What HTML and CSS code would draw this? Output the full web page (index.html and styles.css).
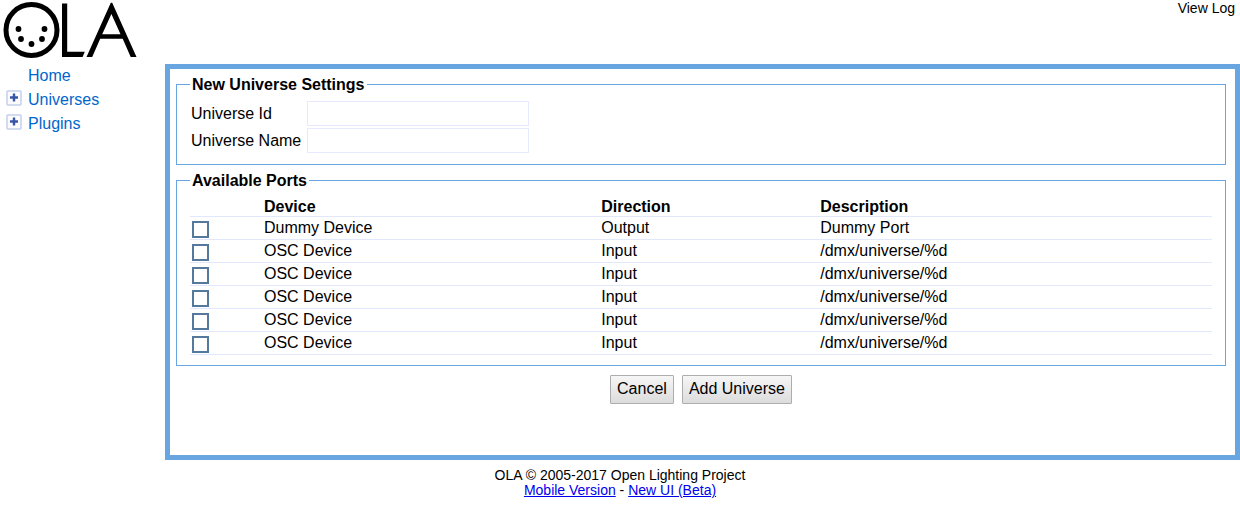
FILE: index.html
```html
<!DOCTYPE html>
<html lang="en">
<head>
<meta charset="utf-8">
<title>OLA</title>
<link rel="stylesheet" href="styles.css">
</head>
<body>
<div class="page">
  <aside class="sidebar">
    <svg class="logo" width="136" height="60" viewBox="0 0 136 60" role="img" aria-label="OLA">
      <circle cx="31.500" cy="30" r="25.500" fill="none" stroke="#000" stroke-width="5"/>
      <circle cx="18.500" cy="29" r="2.900"/><circle cx="44.500" cy="29" r="2.900"/>
      <circle cx="21" cy="39" r="2.900"/><circle cx="42" cy="39" r="2.900"/>
      <circle cx="31.500" cy="44" r="2.900"/>
      <path d="M62 3.500h5.200v48.200h17.600l-2.200 5.200H62z"/>
      <path fill-rule="evenodd" d="M110.800 2.800h1.400L136.500 57h-5.800l-8-18.200h-22.500L92.200 57h-5.700zM111.400 14l-9.200 20.200h18.300z"/>
    </svg>
    <nav class="nav">
      <div class="nav-row"><span class="toggle-space"></span><a href="#home">Home</a></div>
      <div class="nav-row"><button class="toggle" type="button" aria-label="Expand Universes"><svg width="16" height="16" viewBox="0 0 16 16"><rect x="1" y="1" width="14" height="14" rx="1" fill="#fcfcff" stroke="#c3cfea" stroke-width="1.500"/><path d="M4 7.500h8M8 3.500v8" stroke="#3855a5" stroke-width="2.400"/></svg></button><a href="#universes">Universes</a></div>
      <div class="nav-row"><button class="toggle" type="button" aria-label="Expand Plugins"><svg width="16" height="16" viewBox="0 0 16 16"><rect x="1" y="1" width="14" height="14" rx="1" fill="#fcfcff" stroke="#c3cfea" stroke-width="1.500"/><path d="M4 7.500h8M8 3.500v8" stroke="#3855a5" stroke-width="2.400"/></svg></button><a href="#plugins">Plugins</a></div>
    </nav>
  </aside>
  <div class="content">
    <header class="top"><a class="log" href="#log">View Log</a></header>
    <main class="frame">
      <form>
        <fieldset class="settings">
          <legend>New Universe Settings</legend>
          <div class="fields">
            <label for="uid">Universe Id</label><input id="uid" type="text">
            <label for="uname">Universe Name</label><input id="uname" type="text">
          </div>
        </fieldset>
        <fieldset class="ports">
          <legend>Available Ports</legend>
          <table>
            <colgroup><col class="c-check"><col class="c-device"><col class="c-direction"><col></colgroup>
            <thead><tr><th></th><th>Device</th><th>Direction</th><th>Description</th></tr></thead>
            <tbody>
              <tr><td><input type="checkbox" aria-label="Dummy Device"></td><td>Dummy Device</td><td>Output</td><td>Dummy Port</td></tr>
              <tr><td><input type="checkbox" aria-label="OSC Device 1"></td><td>OSC Device</td><td>Input</td><td>/dmx/universe/%d</td></tr>
              <tr><td><input type="checkbox" aria-label="OSC Device 2"></td><td>OSC Device</td><td>Input</td><td>/dmx/universe/%d</td></tr>
              <tr><td><input type="checkbox" aria-label="OSC Device 3"></td><td>OSC Device</td><td>Input</td><td>/dmx/universe/%d</td></tr>
              <tr><td><input type="checkbox" aria-label="OSC Device 4"></td><td>OSC Device</td><td>Input</td><td>/dmx/universe/%d</td></tr>
              <tr><td><input type="checkbox" aria-label="OSC Device 5"></td><td>OSC Device</td><td>Input</td><td>/dmx/universe/%d</td></tr>
            </tbody>
          </table>
        </fieldset>
        <div class="actions">
          <button class="btn" type="button">Cancel</button>
          <button class="btn" type="button">Add Universe</button>
        </div>
      </form>
    </main>
  </div>
</div>
<footer class="footer">
  <div>OLA © 2005-2017 Open Lighting Project</div>
  <div><a href="#mobile">Mobile Version</a> - <a href="#beta">New UI (Beta)</a></div>
</footer>
</body>
</html>
```
FILE: styles.css
```css
* { box-sizing: border-box; }
body {
  margin: 0;
  background: #fff;
  color: #000;
  font: 16px/18px "Liberation Sans", Arial, sans-serif;
}
.page { display: flex; }
.sidebar { flex: 0 0 165px; }
.logo { display: block; width: 136px; height: 60px; overflow: visible; }
.nav { padding: 4px 0 0 6px; }
.nav-row { display: flex; align-items: center; height: 24px; }
.nav-row a { color: #0066cc; text-decoration: none; }
.toggle, .toggle-space { flex: none; width: 16px; height: 16px; margin-right: 6px; }
.toggle { padding: 0; border: 0; background: none; margin-bottom: 4px; }
.toggle svg { display: block; }
.content { flex: 1; }
.top { height: 64px; padding: 0 5px; text-align: right; font-size: 14px; line-height: 16px; }
.log { color: #000; text-decoration: none; }
.frame { min-height: 396px; padding: 5px 9px 0 6px; border: 5px solid #68a6e2; }
fieldset { margin: 0; padding: 0 13px; border: 1px solid #68a6e2; }
legend { padding: 2px 2px 0; font-weight: bold; }
.settings { padding-bottom: 11px; }
.fields {
  display: grid;
  grid-template-columns: max-content 222px;
  column-gap: 6px;
  row-gap: 2px;
  align-items: center;
  padding: 7px 1px 0;
}
.fields input { height: 25px; padding: 2px; border: 1px solid #e6e9ff; font: inherit; outline: 0; }
.ports { margin-top: 5px; padding-bottom: 10px; }
table { width: 100%; margin-top: 4px; border-collapse: collapse; table-layout: fixed; }
.c-check { width: 74px; }
.c-device { width: 33%; }
.c-direction { width: 219px; }
th, td { height: 23px; padding: 0; border-bottom: 1px solid #e2e8fb; text-align: left; line-height: 22px; }
thead th { height: 22px; line-height: 18px; vertical-align: bottom; }
td input {
  appearance: none;
  display: block;
  width: 17px;
  height: 17px;
  margin: 4px 0 0 2px;
  border: 2px solid #55799c;
  background: #fff;
}
.actions { display: flex; justify-content: center; gap: 8px; padding-top: 9px; }
.btn {
  height: 29px;
  padding: 0 6px;
  border: 1px solid #adadad;
  border-radius: 1px;
  background: linear-gradient(#f6f6f6, #dcdcdc);
  color: #000;
  font: inherit;
}
.footer { padding-top: 8px; text-align: center; font-size: 14px; line-height: 15px; }
.footer a { color: #0000ee; }
```
